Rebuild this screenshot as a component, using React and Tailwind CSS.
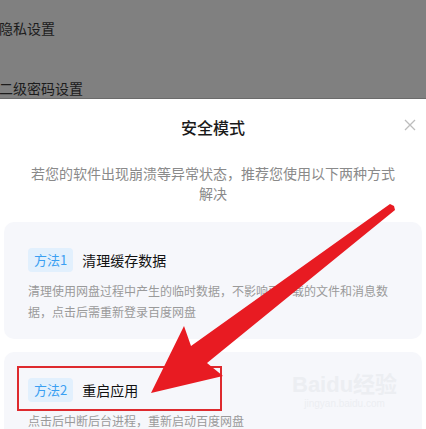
import React from 'react';

function MethodCard({ tag, title, lines }) {
    return (
        <div className="mx-[4px] rounded-[10px] bg-[#f6f7fb] px-[24px] pt-[26px] pb-[17px]">
            <div className="flex items-center">
                <span className="h-[24px] px-[6px] rounded-[4px] bg-[#e2f0fd] text-[#3a9ff2] text-[13px] leading-[24px]">{tag}</span>
                <span className="ml-[9px] text-[14px] text-[#111]">{title}</span>
            </div>
            <p className="mt-[8px] text-[12px] leading-[21px] text-[#9a9a9a]">{lines}</p>
        </div>
    );
}

export default function App() {
    return (
        <div className="relative w-[426px] h-[429px] overflow-hidden bg-white font-['Noto_Sans_CJK_SC',sans-serif]">
            {/* dimmed settings page behind the sheet */}
            <div className="h-[99px] bg-[#808080] border-b border-[#6b6b6b] flex flex-col pt-[18px] gap-[40px] -ml-[1px] text-[14px] leading-[20px] text-[#1c1c1c]">
                <span>隐私设置</span>
                <span>二级密码设置</span>
            </div>

            {/* bottom sheet */}
            <div className="relative pt-[16px]">
                <h2 className="text-center text-[16px] leading-[24px] font-medium text-[#1a1a1a]">安全模式</h2>
                <button className="absolute right-[10px] top-[20px] w-[12px] h-[12px] text-[#bdbdbd]">
                    <svg viewBox="0 0 12 12" className="w-[12px] h-[12px]" fill="none" stroke="currentColor" strokeWidth="1.3">
                        <path d="M1 1 L11 11 M11 1 L1 11" />
                    </svg>
                </button>
                <p className="mt-[24px] px-[25px] text-center text-[14px] leading-[20px] text-[#8a8a8a]">
                    若您的软件出现崩溃等异常状态，推荐您使用以下两种方式解决
                </p>
                <div className="mt-[19px] flex flex-col gap-[13px]">
                    <MethodCard tag="方法1" title="清理缓存数据" lines="清理使用网盘过程中产生的临时数据，不影响已下载的文件和消息数据，点击后需重新登录百度网盘" />
                    <MethodCard tag="方法2" title="重启应用" lines="点击后中断后台进程，重新启动百度网盘" />
                </div>
            </div>

            {/* watermark */}
            <div className="absolute left-[292px] top-[372px] flex flex-col items-center text-[#eceef2] pointer-events-none">
                <span className="text-[22px] leading-[26px] font-bold font-['Liberation_Sans','Noto_Sans_CJK_SC',sans-serif]">Baidu经验</span>
                <span className="text-[10px] leading-[12px] font-['Liberation_Sans',sans-serif]">jingyan.baidu.com</span>
            </div>

            {/* annotation: red box + arrow */}
            <div className="absolute left-[17px] top-[366px] w-[205px] h-[45px] border-2 border-[#de2a2e]" />
            <svg className="absolute left-0 top-0 pointer-events-none" width="426" height="429" viewBox="0 0 426 429">
                <polygon points="390,204 394,206 395,210 207,363 223,376 151,393 184,326 191,346" fill="#e81b22" />
            </svg>
        </div>
    );
}
